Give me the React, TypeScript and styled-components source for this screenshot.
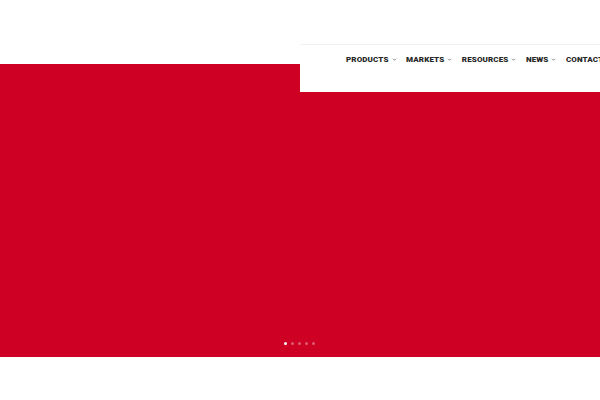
import React, { FunctionComponent } from 'react';
import styled, { createGlobalStyle } from 'styled-components';

const menuItems = ['Products', 'Markets', 'Resources', 'News', 'Contact'];
const slides = [0, 1, 2, 3, 4];

const GlobalStyle = createGlobalStyle`
  html, body {
    margin: 0;
    padding: 0;
    background: #ffffff;
    overflow: hidden;
  }
`;

const Page = styled.div`
  position: relative;
  width: 600px;
  height: 400px;
  background: #ffffff;
  font-family: Roboto, 'Open Sans', sans-serif;
`;

const TopBar = styled.div`
  height: 64px;
`;

const Slider = styled.div`
  height: 293px;
  background: #ce0024;
  display: flex;
  align-items: flex-end;
  justify-content: center;
  padding-bottom: 12px;
  box-sizing: border-box;
`;

const Dots = styled.div`
  display: flex;
  gap: 4px;
  margin-left: -1px;
`;

const Dot = styled.span<{ active?: boolean }>`
  width: 3px;
  height: 3px;
  border-radius: 50%;
  background: ${({ active }) => (active ? '#ffffff' : 'rgba(255, 255, 255, 0.35)')};
`;

const NavPanel = styled.nav`
  position: absolute;
  top: 44px;
  left: 300px;
  width: 300px;
  height: 48px;
  background: #ffffff;
  border-top: 1px solid #f2f2f2;
  box-sizing: border-box;
  display: flex;
  align-items: flex-start;
  padding: 9.5px 0 0 46px;
  gap: 9.5px;
  white-space: nowrap;
  overflow: hidden;
`;

const MenuLink = styled.a`
  display: flex;
  align-items: center;
  gap: 3px;
  font-size: 8px;
  font-weight: 900;
  letter-spacing: 0.12px;
  text-transform: uppercase;
  color: #262626;
  text-decoration: none;
  line-height: 10px;
`;

const Chevron = styled.svg`
  width: 5px;
  height: 5px;
  color: #555;
`;

const App: FunctionComponent = () => {
  return (
    <Page>
      <GlobalStyle />
      <TopBar />
      <Slider>
        <Dots>
          {slides.map((s) => (
            <Dot key={s} active={s === 0} />
          ))}
        </Dots>
      </Slider>
      <NavPanel>
        {menuItems.map((item, i) => (
          <MenuLink href='#' key={i}>
            {item}
            {item !== 'Contact' && (
              <Chevron viewBox='0 0 10 10' fill='none'>
                <path d='M2 3.5 L5 6.5 L8 3.5' stroke='currentColor' strokeWidth='1.4' />
              </Chevron>
            )}
          </MenuLink>
        ))}
      </NavPanel>
    </Page>
  );
};

export default App;
